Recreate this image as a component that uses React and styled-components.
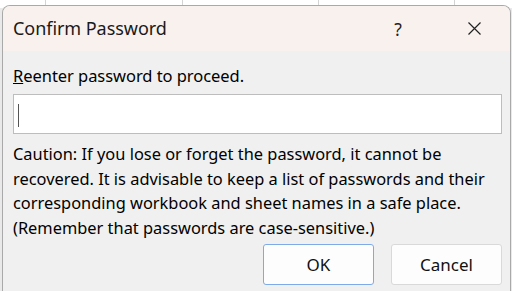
import React from "react";
import styled, { createGlobalStyle } from "styled-components";

const Global = createGlobalStyle`
  html, body { margin: 0; padding: 0; }
  body {
    width: 512px; height: 291px; overflow: hidden;
    font-family: "Noto Sans", "Open Sans", sans-serif;
    background: #ececec;
  }
`;

const Backdrop = styled.div`
  width: 512px;
  height: 291px;
  display: flex;
  flex-direction: column;
  background:
    linear-gradient(to right,
      transparent 45px, #d4d4d4 45px, #d4d4d4 46px, transparent 46px,
      transparent 182px, #d4d4d4 182px, #d4d4d4 183px, transparent 183px,
      transparent 318px, #d4d4d4 318px, #d4d4d4 319px, transparent 319px,
      transparent 454px, #d4d4d4 454px, #d4d4d4 455px, transparent 455px) top / 100% 8px no-repeat,
    linear-gradient(#ffffff, #ffffff) top / 100% 8px no-repeat,
    #e9e9e9;
  padding: 5px 1px 0 2px;
  box-sizing: border-box;
`;

const Dialog = styled.div`
  flex: 1;
  display: flex;
  flex-direction: column;
  background: #f0f0f0;
  border: 1px solid #a9a9a9;
  border-bottom: none;
  border-radius: 8px 8px 0 0;
  overflow: hidden;
  color: #000;
`;

const TitleBar = styled.div`
  height: 45px;
  flex: none;
  display: flex;
  align-items: center;
  background: #f9f1ee;
  padding-left: 10px;
`;

const Title = styled.div`
  flex: 1;
  font-size: 18px;
  letter-spacing: -0.05px;
  color: #1a1a1a;
  padding-bottom: 2px;
`;

const TitleButton = styled.div`
  width: ${(p) => p.$w}px;
  margin-right: ${(p) => p.$mr || 0}px;
  height: 45px;
  display: flex;
  align-items: center;
  justify-content: center;
  font-size: 17.5px;
  color: #222;
`;

const Body = styled.div`
  flex: 1;
  display: flex;
  flex-direction: column;
  padding: 14px 8px 0 10px;
`;

const Label = styled.div`
  font-size: 16.5px;
  line-height: 22px;
  letter-spacing: -0.05px;
`;

const Field = styled.div`
  margin-top: 7px;
  height: 38px;
  background: #fff;
  border: 1px solid #bdbdbd;
  display: flex;
  align-items: center;
  padding-left: 4px;
`;

const Caret = styled.div`
  width: 1px;
  height: 23px;
  background: #555;
  margin-top: 2px;
`;

const Caution = styled.p`
  margin: 8px 0 0;
  font-size: 16.4px;
  line-height: 24.5px;
  letter-spacing: 0;
`;

const Buttons = styled.div`
  display: flex;
  justify-content: flex-end;
  gap: 17px;
  margin-top: 4px;
`;

const Button = styled.div`
  width: 111px;
  height: 41px;
  box-sizing: border-box;
  background: #fdfdfd;
  border: 1px solid ${(p) => (p.$primary ? "#7eaaea" : "#d9d9d9")};
  border-radius: 3px;
  display: flex;
  align-items: center;
  justify-content: center;
  font-size: 17px;
  color: #111;
`;

export default function App() {
  return (
    <>
      <Global />
      <Backdrop>
        <Dialog>
          <TitleBar>
            <Title>Confirm Password</Title>
            <TitleButton $w={30} $mr={39}>?</TitleButton>
            <TitleButton $w={44} $mr={14}>
              <svg width="13" height="13" viewBox="0 0 13 13">
                <path d="M0.5 0.5L12.5 12.5M12.5 0.5L0.5 12.5" stroke="#222" strokeWidth="1.2" fill="none" />
              </svg>
            </TitleButton>
          </TitleBar>
          <Body>
            <Label>
              <u>R</u>eenter password to proceed.
            </Label>
            <Field>
              <Caret />
            </Field>
            <Caution>
              Caution: If you lose or forget the password, it cannot be
              <br />
              recovered. It is advisable to keep a list of passwords and their
              <br />
              corresponding workbook and sheet names in a safe place.
              <br />
              (Remember that passwords are case-sensitive.)
            </Caution>
            <Buttons>
              <Button $primary>OK</Button>
              <Button>Cancel</Button>
            </Buttons>
          </Body>
        </Dialog>
      </Backdrop>
    </>
  );
}
